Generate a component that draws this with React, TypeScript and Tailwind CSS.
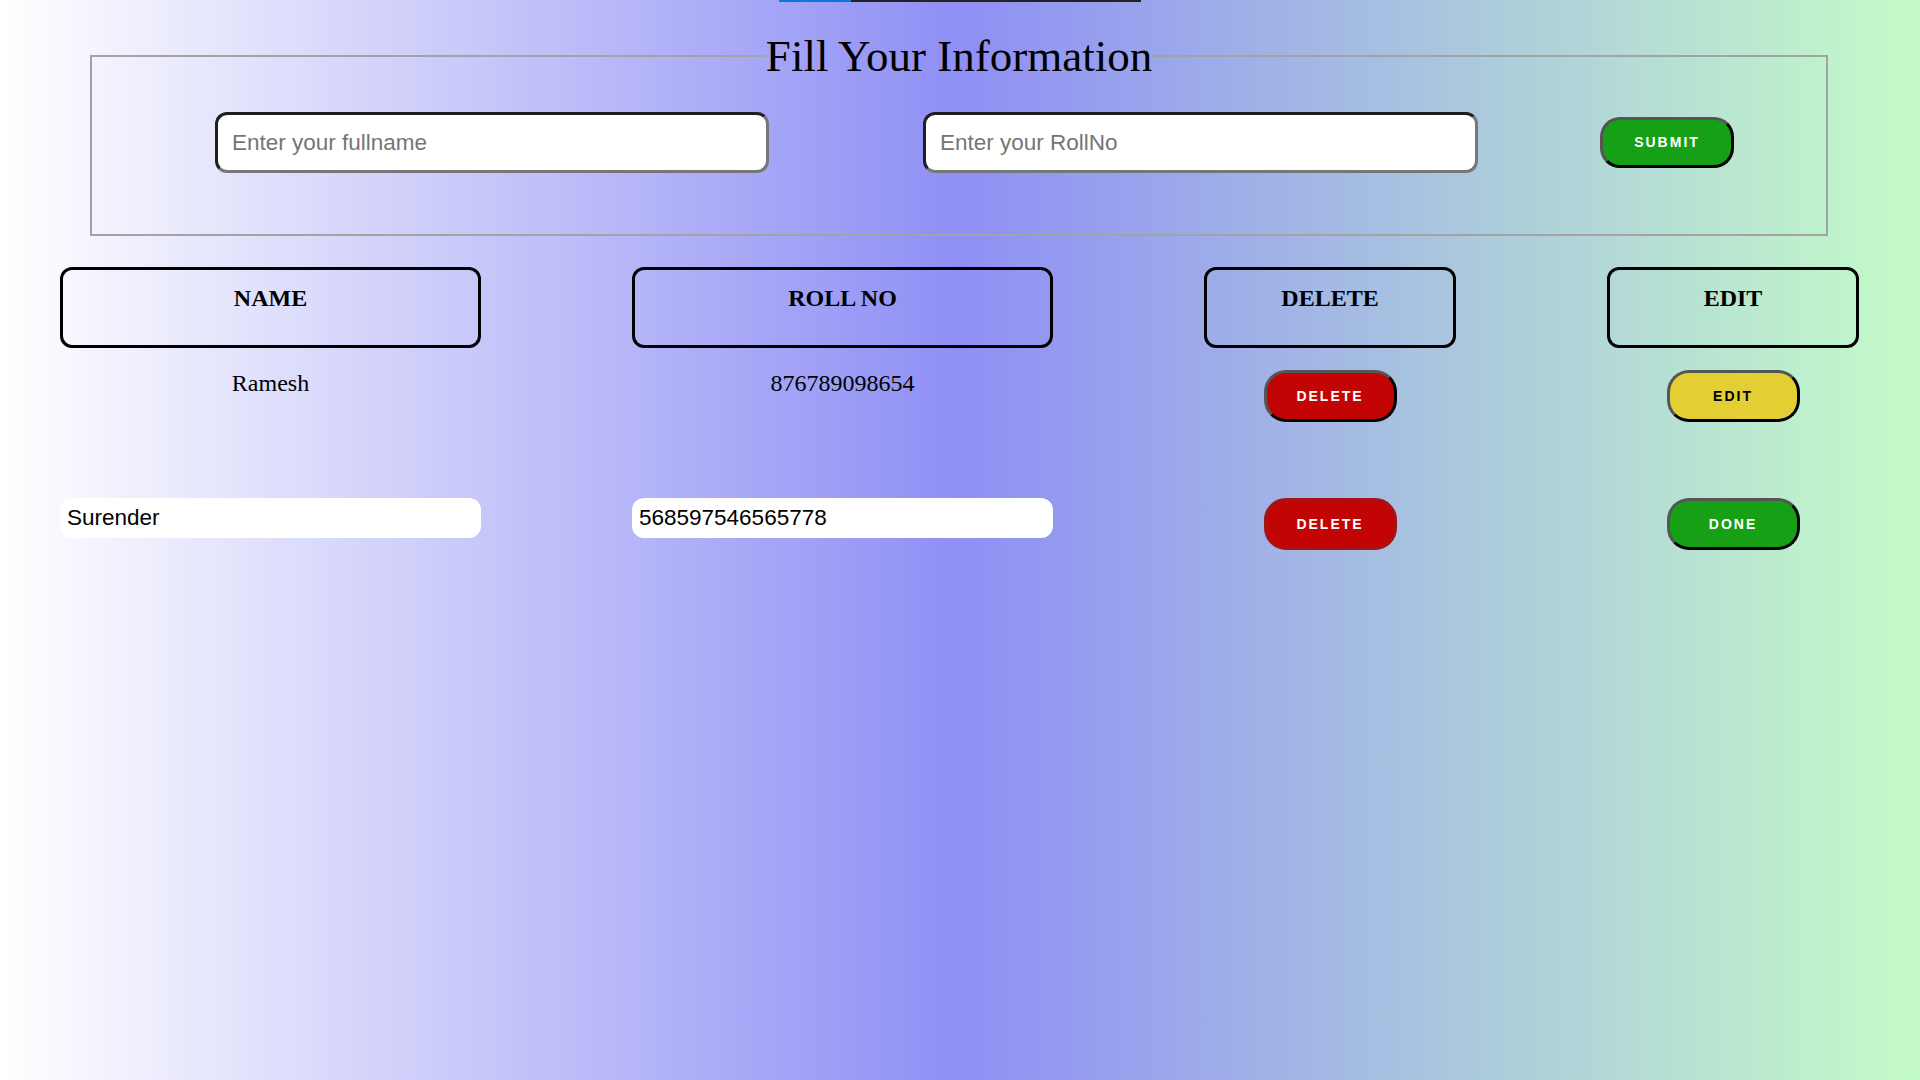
import React, { useState } from 'react';

type Student = { name: string; roll: string };

const serif = "font-['Liberation_Serif','Times_New_Roman',serif]";
const sans = "font-['Liberation_Sans',Arial,sans-serif]";

const pillBase =
  "w-[133px] h-[52px] rounded-[22px] border-[3px] text-[14px] font-bold tracking-[2px] " + sans;

const App: React.FC = () => {
  const [fullname, setFullname] = useState('');
  const [rollNo, setRollNo] = useState('');
  const [rows] = useState<Student[]>([{ name: 'Ramesh', roll: '876789098654' }]);
  // second row is in edit mode
  const [editName, setEditName] = useState('Surender');
  const [editRoll, setEditRoll] = useState('568597546565778');

  return (
    <div className="min-h-screen w-full bg-[linear-gradient(to_right,#ffffff,#8f8ff5,#c4fcc8)] text-black">
      {/* thin bar at the very top */}
      <div className="flex justify-center">
        <div className="flex w-[362px] h-[2px]">
          <div className="w-[72px] bg-[#0a78d7]" />
          <div className="flex-1 bg-[#222222]" />
        </div>
      </div>

      {/* Form */}
      <fieldset className="ml-[90px] mt-[28px] w-[1738px] border-2 border-solid border-[#a3a3a3] pb-[61px]">
        <legend className={`mx-auto px-0 text-[45px] leading-[52px] ${serif}`}>Fill Your Information</legend>
        <div className="flex items-center pl-[123px] pt-[30px]">
          <input
            value={fullname}
            onChange={e => setFullname(e.target.value)}
            placeholder="Enter your fullname"
            className={`w-[554px] h-[61px] rounded-[12px] bg-white border-[3px] border-t-[#1f1f1f] border-l-[#1f1f1f] border-b-[#777777] border-r-[#777777] pl-[14px] text-[22.5px] outline-none placeholder:text-[#757575] ${sans}`}
          />
          <input
            value={rollNo}
            onChange={e => setRollNo(e.target.value)}
            placeholder="Enter your RollNo"
            className={`ml-[154px] w-[555px] h-[61px] rounded-[12px] bg-white border-[3px] border-t-[#1f1f1f] border-l-[#1f1f1f] border-b-[#777777] border-r-[#777777] pl-[14px] text-[22.5px] outline-none placeholder:text-[#757575] ${sans}`}
          />
          <button
            className={`ml-[122px] w-[134px] h-[51px] rounded-[20px] border-[3px] border-t-[#555555] border-l-[#555555] border-b-black border-r-black bg-[#16a016] text-white text-[14px] font-bold tracking-[2px] ${sans}`}
          >
            SUBMIT
          </button>
        </div>
      </fieldset>

      {/* Table */}
      <div className="ml-[60px] mt-[31px] grid grid-cols-[421px_421px_252px_252px] gap-x-[151px]">
        {['NAME', 'ROLL NO', 'DELETE', 'EDIT'].map(h => (
          <div
            key={h}
            className={`h-[81px] rounded-[12px] border-[3px] border-black pt-[10px] text-center text-[24px] font-bold ${serif}`}
          >
            {h}
          </div>
        ))}

        {rows.map(r => (
          <React.Fragment key={r.roll}>
            <div className={`mt-[17px] h-[133px] text-center text-[24px] ${serif}`}>{r.name}</div>
            <div className={`mt-[17px] h-[133px] text-center text-[24px] ${serif}`}>{r.roll}</div>
            <div className="mt-[22px] flex justify-center">
              <button className={`${pillBase} bg-[#c20404] text-white border-t-[#555555] border-l-[#555555] border-b-black border-r-black`}>
                DELETE
              </button>
            </div>
            <div className="mt-[22px] flex justify-center">
              <button className={`${pillBase} bg-[#e3cf33] text-black border-t-[#555555] border-l-[#555555] border-b-black border-r-black`}>
                EDIT
              </button>
            </div>
          </React.Fragment>
        ))}

        <div>
          <input
            value={editName}
            onChange={e => setEditName(e.target.value)}
            className={`w-full h-[40px] rounded-[12px] bg-white pl-[7px] text-[22.5px] outline-none ${sans}`}
          />
        </div>
        <div>
          <input
            value={editRoll}
            onChange={e => setEditRoll(e.target.value)}
            className={`w-full h-[40px] rounded-[12px] bg-white pl-[7px] text-[22.5px] outline-none ${sans}`}
          />
        </div>
        <div className="flex justify-center">
          <button className={`${pillBase} bg-[#c20404] text-white border-[#a51414]`}>DELETE</button>
        </div>
        <div className="flex justify-center">
          <button className={`${pillBase} bg-[#16a016] text-white border-t-[#555555] border-l-[#555555] border-b-black border-r-black`}>
            DONE
          </button>
        </div>
      </div>
    </div>
  );
};

export default App;
